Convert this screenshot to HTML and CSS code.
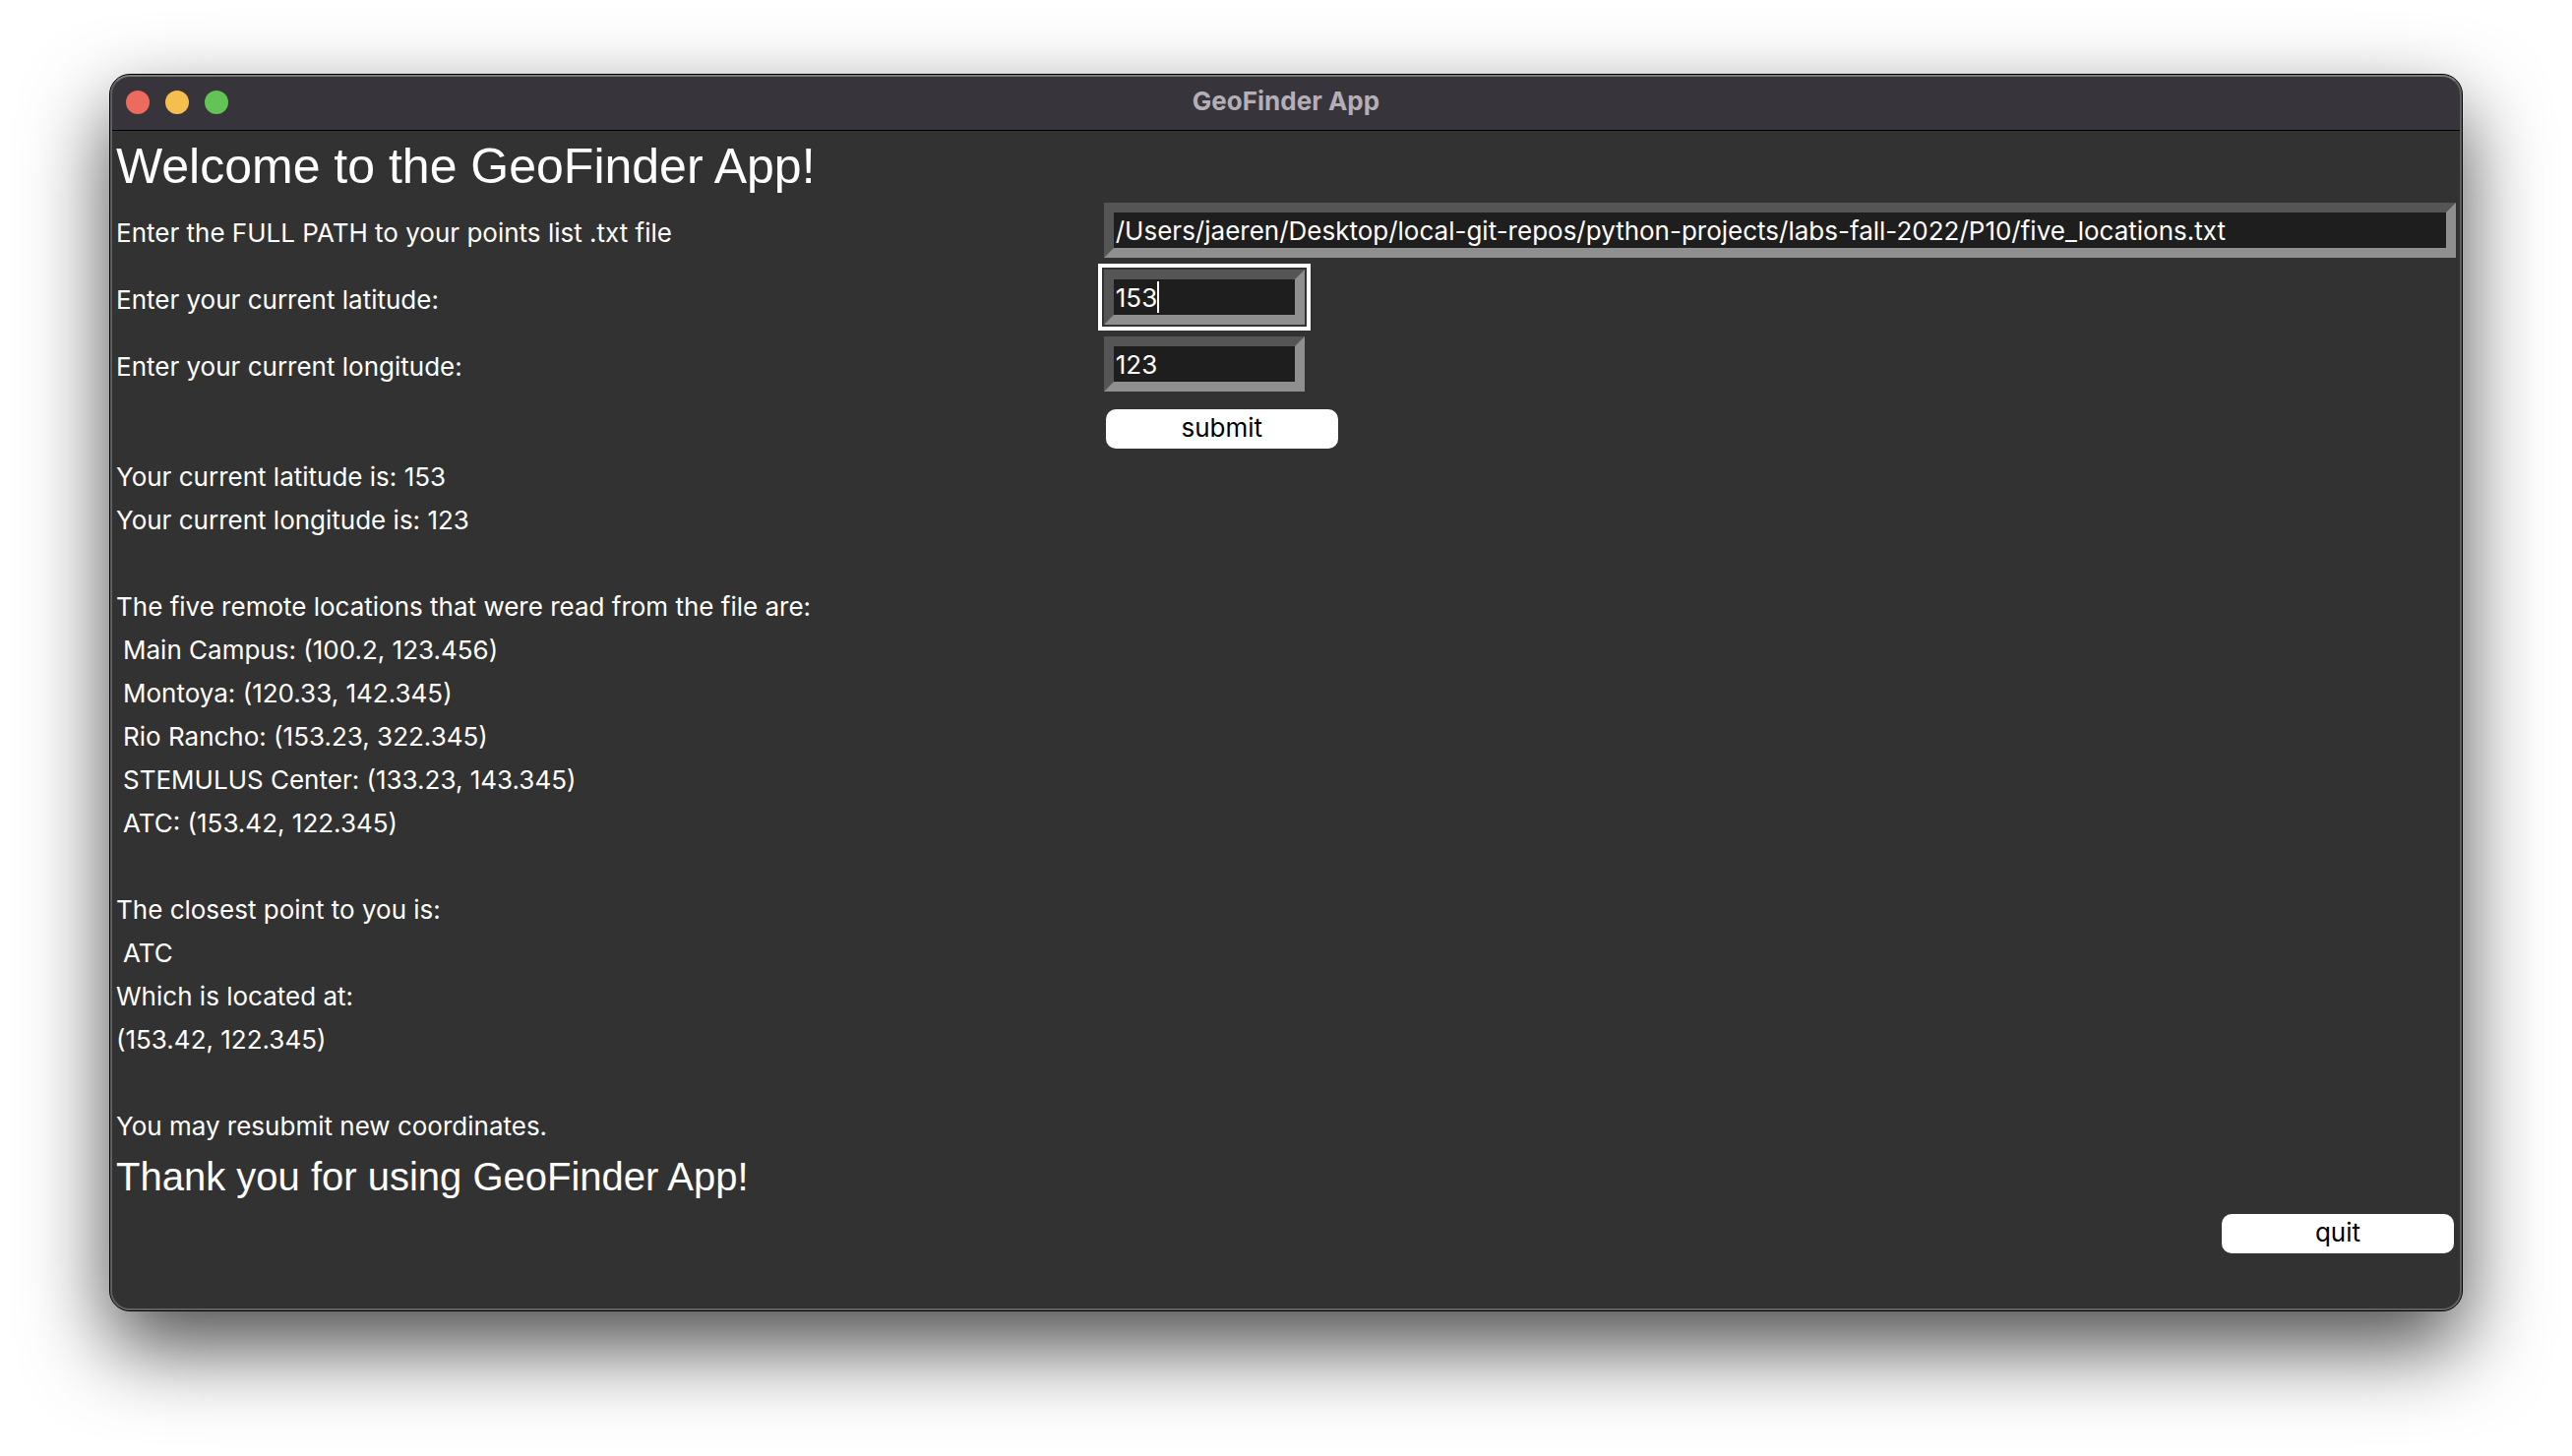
FILE: index.html
```html
<!DOCTYPE html>
<html lang="en">
<head>
<meta charset="utf-8">
<title>GeoFinder App</title>
<link rel="stylesheet" href="styles.css">
</head>
<body>
<main class="window">
  <header class="titlebar">
    <div class="lights">
      <button class="light light-close" type="button" aria-label="Close"></button>
      <button class="light light-minimize" type="button" aria-label="Minimize"></button>
      <button class="light light-zoom" type="button" aria-label="Zoom"></button>
    </div>
    <div class="title">GeoFinder App</div>
  </header>
  <div class="content">
    <h1 class="welcome">Welcome to the GeoFinder App!</h1>
    <form class="form">
      <label class="label" for="path">Enter the FULL PATH to your points list .txt file</label>
      <div class="field"><input class="entry" id="path" type="text" value="/Users/jaeren/Desktop/local-git-repos/python-projects/labs-fall-2022/P10/five_locations.txt"></div>
      <label class="label" for="latitude">Enter your current latitude:</label>
      <div class="field"><input class="entry entry-short entry-active" id="latitude" type="text" value="153"><span class="caret"></span></div>
      <label class="label" for="longitude">Enter your current longitude:</label>
      <div class="field"><input class="entry entry-short" id="longitude" type="text" value="123"></div>
      <div class="submit-row"><button class="button" type="button">submit</button></div>
    </form>
    <section class="results">
      <div>
        <p>Your current latitude is: 153</p>
        <p>Your current longitude is: 123</p>
      </div>
      <div>
        <p>The five remote locations that were read from the file are:</p>
        <ul class="locations">
          <li>Main Campus: (100.2, 123.456)</li>
          <li>Montoya: (120.33, 142.345)</li>
          <li>Rio Rancho: (153.23, 322.345)</li>
          <li>STEMULUS Center: (133.23, 143.345)</li>
          <li>ATC: (153.42, 122.345)</li>
        </ul>
      </div>
      <div>
        <p>The closest point to you is:</p>
        <p class="closest">ATC</p>
        <p>Which is located at:</p>
        <p>(153.42, 122.345)</p>
      </div>
      <p>You may resubmit new coordinates.</p>
    </section>
    <h2 class="thanks">Thank you for using GeoFinder App!</h2>
    <div class="quit-row"><button class="button" type="button">quit</button></div>
  </div>
</main>
</body>
</html>
```
FILE: styles.css
```css
* {
  box-sizing: border-box;
}

body {
  margin: 0;
  padding: 75px 111px 147px;
  min-height: 100vh;
  display: flex;
  background: #fff;
  color: #fff;
  font: 26px/44px Inter, "Liberation Sans", sans-serif;
}

h1, h2, p, ul {
  margin: 0;
  padding: 0;
  font-weight: 400;
}

button, input {
  font: inherit;
  margin: 0;
}

.window {
  flex: 1;
  position: relative;
  border: 1px solid #000;
  border-radius: 21px;
  background: #323232;
  box-shadow: 0 36px 84px rgba(0, 0, 0, 0.7);
}

/* light rim just inside the window edge */
.window::after {
  content: "";
  position: absolute;
  inset: 0;
  border: 2px solid #5f5f5f;
  border-top-color: #7a7a7a;
  border-radius: 20px;
  pointer-events: none;
}

.titlebar {
  display: grid;
  grid-template-columns: 1fr auto 1fr;
  align-items: center;
  height: 57px;
  padding: 0 16px;
  border-bottom: 1px solid #000;
  border-radius: 20px 20px 0 0;
  background: #38343b;
}

.lights {
  display: flex;
  gap: 16px;
}

.light {
  width: 24px;
  height: 24px;
  padding: 0;
  border: 0;
  border-radius: 50%;
}

.light-close { background: #ed6a5e; }
.light-minimize { background: #f5bf4f; }
.light-zoom { background: #61c454; }

.title {
  color: #b4afb6;
  font-weight: 700;
  line-height: 52px;
  padding-bottom: 2px;
}

.content {
  padding: 0 6px;
}

.welcome {
  padding-top: 5px;
  font: 50px/62px "Liberation Sans", Arial, sans-serif;
}

.form {
  display: grid;
  grid-template-columns: 42% 1fr;
  column-gap: 5px;
  align-items: center;
}

.label {
  padding-top: 6px;
}

.field {
  position: relative;
  display: flex;
  align-items: center;
  height: 68px;
}

.entry {
  width: 100%;
  height: 56px;
  padding: 0 2px;
  border: 10px solid;
  border-color: #555 #8f8f8f #8f8f8f #555;
  border-radius: 0;
  background: #1e1e1e;
  color: #fff;
}

.entry-short {
  width: 204px;
}

.entry-active {
  outline: 4px solid #fff;
  outline-offset: 2px;
}

.caret {
  position: absolute;
  left: 54px;
  top: 18px;
  width: 2px;
  height: 32px;
  background: #fff;
}

.submit-row {
  grid-column: 2;
  padding: 12px 2px 7px;
}

.button {
  display: block;
  width: 236px;
  height: 40px;
  padding: 0 0 2px;
  border: 0;
  border-radius: 10px;
  background: #fff;
  color: #000;
  line-height: 38px;
}

.results {
  display: grid;
  gap: 44px;
}

.locations {
  list-style: none;
}

.locations, .closest {
  padding-left: 7px;
}

.thanks {
  padding-bottom: 2px;
  font: 40px/58px "Liberation Sans", Arial, sans-serif;
}

.quit-row {
  display: flex;
  justify-content: flex-end;
  padding: 7px 2px;
}
```
